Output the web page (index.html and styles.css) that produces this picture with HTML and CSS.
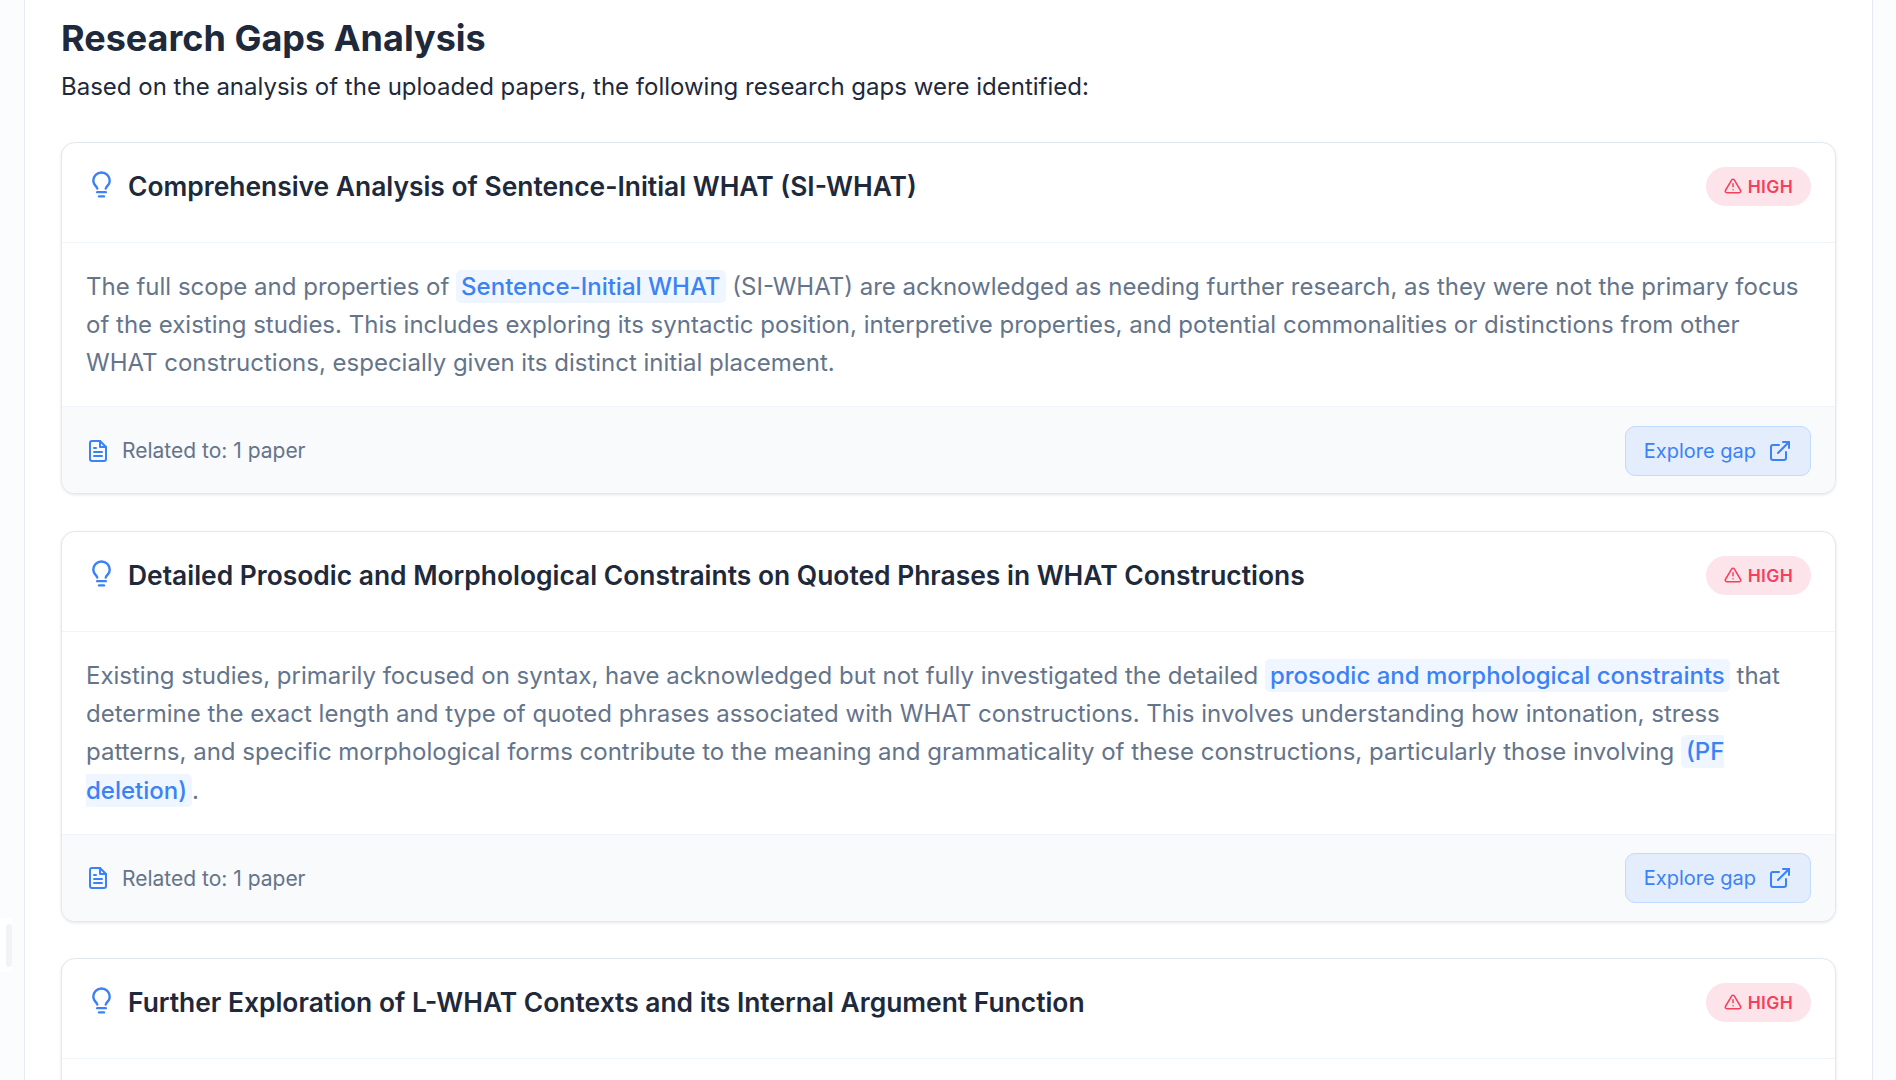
FILE: index.html
```html
<!DOCTYPE html>
<html lang="en">
<head>
<meta charset="utf-8">
<title>Research Gaps Analysis</title>
<link rel="stylesheet" href="styles.css">
</head>
<body>
<svg class="sprite" width="0" height="0" aria-hidden="true">
  <symbol id="bulb" viewBox="0 0 24 24"><path d="M8.5 14.5c-.3-1-1-1.8-1.7-2.6A6.6 6.6 0 0 1 5.2 8a6.8 6.8 0 1 1 13.6 0c0 1.6-.7 2.9-1.6 3.9-.7.8-1.4 1.6-1.7 2.6"/><path d="M8.5 17.5h7"/><path d="M10 21h4"/></symbol>
  <symbol id="warn" viewBox="0 0 24 24"><path d="M10.3 3.9 1.9 18a2 2 0 0 0 1.7 3h16.8a2 2 0 0 0 1.7-3L13.7 3.9a2 2 0 0 0-3.4 0z"/><path d="M12 9v4"/><path d="M12 17h.01"/></symbol>
  <symbol id="doc" viewBox="0 0 24 24"><path d="M14 2H6a2 2 0 0 0-2 2v16a2 2 0 0 0 2 2h12a2 2 0 0 0 2-2V8z"/><path d="M14 2v6h6"/><path d="M16 13H8"/><path d="M16 17H8"/><path d="M10 9H8"/></symbol>
  <symbol id="ext" viewBox="0 0 24 24"><path d="M18 13v6a2 2 0 0 1-2 2H5a2 2 0 0 1-2-2V8a2 2 0 0 1 2-2h6"/><path d="M15 3h6v6"/><path d="M10 14 21 3"/></symbol>
</svg>
<div class="rail"><span class="rail-slot"><span class="rail-handle"></span></span></div>
<main class="panel">
  <h1 class="page-title">Research Gaps Analysis</h1>
  <p class="page-intro">Based on the analysis of the uploaded papers, the following research gaps were identified:</p>

  <article class="gap">
    <header class="gap-head">
      <svg class="icon bulb"><use href="#bulb"/></svg>
      <h2 class="gap-title">Comprehensive Analysis of Sentence-Initial WHAT (SI-WHAT)</h2>
      <span class="pill"><svg class="icon warn"><use href="#warn"/></svg>HIGH</span>
    </header>
    <div class="gap-body">
      <p>The full scope and properties of <mark class="term">Sentence-Initial WHAT</mark> (SI-WHAT) are acknowledged as needing further research, as they were not the primary focus of the existing studies. This includes exploring its syntactic position, interpretive properties, and potential commonalities or distinctions from other WHAT constructions, especially given its distinct initial placement.</p>
    </div>
    <footer class="gap-foot">
      <span class="related"><svg class="icon doc"><use href="#doc"/></svg>Related to: 1 paper</span>
      <a class="explore">Explore gap<svg class="icon ext"><use href="#ext"/></svg></a>
    </footer>
  </article>

  <article class="gap">
    <header class="gap-head">
      <svg class="icon bulb"><use href="#bulb"/></svg>
      <h2 class="gap-title">Detailed Prosodic and Morphological Constraints on Quoted Phrases in WHAT Constructions</h2>
      <span class="pill"><svg class="icon warn"><use href="#warn"/></svg>HIGH</span>
    </header>
    <div class="gap-body">
      <p>Existing studies, primarily focused on syntax, have acknowledged but not fully investigated the detailed <mark class="term">prosodic and morphological constraints</mark> that determine the exact length and type of quoted phrases associated with WHAT constructions. This involves understanding how intonation, stress patterns, and specific morphological forms contribute to the meaning and grammaticality of these constructions, particularly those involving <mark class="term">(PF deletion)</mark>.</p>
    </div>
    <footer class="gap-foot">
      <span class="related"><svg class="icon doc"><use href="#doc"/></svg>Related to: 1 paper</span>
      <a class="explore">Explore gap<svg class="icon ext"><use href="#ext"/></svg></a>
    </footer>
  </article>

  <article class="gap">
    <header class="gap-head">
      <svg class="icon bulb"><use href="#bulb"/></svg>
      <h2 class="gap-title">Further Exploration of L-WHAT Contexts and its Internal Argument Function</h2>
      <span class="pill"><svg class="icon warn"><use href="#warn"/></svg>HIGH</span>
    </header>
    <div class="gap-body">
      <p>&nbsp;</p>
    </div>
  </article>
</main>
</body>
</html>
```
FILE: styles.css
```css
* { box-sizing: border-box; }
html, body { margin: 0; height: 100%; overflow: hidden; }
body {
  display: flex;
  height: 1080px;
  background: #fbfcfd;
  font-family: Inter, "Liberation Sans", sans-serif;
  color: #1e293b;
}
.sprite { position: absolute; }
.rail { width: 24px; flex: none; padding-top: 918px; }
.rail-slot { display: flex; align-items: center; justify-content: flex-end; width: 12px; height: 54px; background: #fff; }
.rail-handle { width: 6px; height: 43px; border-radius: 3px; background: #f2f3f5; }
.panel {
  width: 1849px;
  flex: none;
  height: 1080px;
  overflow: hidden;
  padding: 16px 36px 0;
  background: #fff;
  border-left: 1px solid #e6eaf2;
  border-right: 1px solid #e6eaf2;
}
.page-title { margin: 0; font-size: 36px; line-height: 44px; font-weight: 700; color: #1e293b; }
.page-intro { margin: 8px 0 0; font-size: 24px; line-height: 38px; color: #1e293b; }
.gap {
  margin-top: 36.6px;
  border: 1px solid #e2e8f0;
  border-radius: 14px;
  background: #fff;
  box-shadow: 0 1px 3px rgba(15, 23, 42, .1);
  overflow: hidden;
}
.page-intro + .gap { margin-top: 36px; }
.gap-head {
  display: flex;
  align-items: center;
  height: 100px;
  padding: 0 24px 13px;
  border-bottom: 1px solid #f1f5f9;
}
.icon { fill: none; stroke: currentColor; stroke-width: 2; stroke-linecap: round; stroke-linejoin: round; flex: none; }
.bulb { width: 29px; height: 29px; margin: -2px 12px 0 1px; color: #3b82f6; }
.gap-title { flex: 1; margin: 0; font-size: 26.4px; line-height: 36px; font-weight: 600; color: #1e293b; }
.pill {
  display: inline-flex;
  align-items: center;
  gap: 6px;
  height: 39px;
  padding: 0 18px;
  border-radius: 20px;
  background: #fde3ea;
  color: #f43f5e;
  font-size: 17.5px;
  font-weight: 600;
  letter-spacing: .3px;
}
.warn { width: 18px; height: 18px; }
.gap-body { padding: 24.6px 24px 23.6px; color: #64748b; font-size: 24px; line-height: 38.4px; }
.gap-body p { margin: 0; }
.term { padding: 2px 5px; border-radius: 5px; background: #eff6ff; color: #3b82f6; font-weight: 500; }
.gap-foot {
  display: flex;
  align-items: center;
  justify-content: space-between;
  height: 87px;
  padding: 1px 24px 0;
  background: #f8fafc;
  border-top: 1px solid #f1f5f9;
}
.related { display: inline-flex; align-items: center; gap: 12px; color: #64748b; font-size: 21px; }
.doc { width: 24px; height: 24px; color: #3b82f6; }
.explore {
  display: inline-flex;
  align-items: center;
  gap: 12px;
  height: 50px;
  padding: 0 18px;
  border: 1px solid #bfdbfe;
  border-radius: 10px;
  background: #e3edfb;
  color: #3b82f6;
  font-size: 20px;
}
.ext { width: 24px; height: 24px; }
```
